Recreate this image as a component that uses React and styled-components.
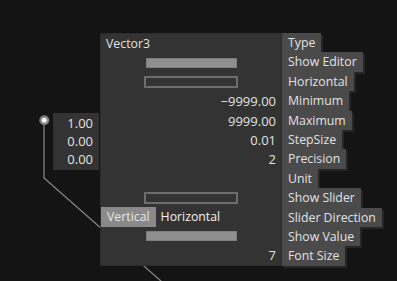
import React from "react";
import styled, { createGlobalStyle } from "styled-components";

const Global = createGlobalStyle`
  html, body { margin: 0; padding: 0; background: #141414; }
  body { font-family: "Open Sans", "Noto Sans", sans-serif; }
`;

const ROW = 19.42;

const Canvas = styled.div`
  position: relative;
  width: 397px;
  height: 281px;
  overflow: hidden;
  background: #141414;
`;

const Wires = styled.svg`
  position: absolute;
  left: 0;
  top: 0;
  width: 397px;
  height: 281px;
`;

const Node = styled.div`
  position: absolute;
  left: 53px;
  top: 33px;
  display: flex;
  align-items: flex-start;
  font-size: 12.3px;
  color: #e2e2e2;
`;

const InputPanel = styled.div`
  margin-top: 80px;
  width: 46px;
  padding: 1px 0;
  background: #333333;
  display: flex;
  flex-direction: column;
`;

const InputValue = styled.div`
  height: 18.2px;
  line-height: 18.2px;
  font-size: 13px;
  text-align: right;
  padding-right: 6px;
`;

const Main = styled.div`
  box-sizing: border-box;
  width: 182px;
  height: ${ROW * 12}px;
  background: #333333;
  border: 1px solid #2b2b2b;
  display: grid;
  grid-template-rows: repeat(12, 1fr);
  margin-left: 1px;
`;

const Cell = styled.div`
  display: flex;
  align-items: center;
  justify-content: center;
  white-space: nowrap;
`;

const TitleCell = styled(Cell)`
  justify-content: flex-start;
  padding-left: 5px;
`;

const ValueCell = styled(Cell)`
  justify-content: flex-end;
  padding-right: 5px;
  font-size: 13px;
`;

const ToggleCell = styled(Cell)`
  justify-content: flex-start;
  align-items: stretch;
`;

const FilledBar = styled.div`
  box-sizing: border-box;
  width: 91px;
  height: 10px;
  background: #8f8f8f;
  border: 1px solid #7d7d7d;
`;

const OutlineBar = styled.div`
  box-sizing: border-box;
  width: 94px;
  height: 12px;
  border: 2px solid #6d6d6d;
`;

const Toggle = styled.div`
  display: flex;
  align-items: center;
  padding: 0 6px 0 ${(p) => (p.$active ? "6px" : "5px")};
  background: ${(p) => (p.$active ? "#8a8a8a" : "transparent")};
  color: ${(p) => (p.$active ? "#e6e6e6" : "#f2f2f2")};
`;

const Labels = styled.div`
  display: flex;
  flex-direction: column;
  align-items: flex-start;
`;

const Label = styled.div`
  height: ${ROW}px;
  line-height: ${ROW}px;
  padding: 0 6px;
  background: #4a4a4a;
  box-shadow: 2px 2px 0 #262626;
  white-space: nowrap;
`;

const labels = [
  "Type",
  "Show Editor",
  "Horizontal",
  "Minimum",
  "Maximum",
  "StepSize",
  "Precision",
  "Unit",
  "Show Slider",
  "Slider Direction",
  "Show Value",
  "Font Size",
];

export default function App() {
  return (
    <Canvas>
      <Global />
      <Wires viewBox="0 0 397 281">
        <polyline
          points="44,125 44,178 170,289"
          fill="none"
          stroke="#8a8a8a"
          strokeWidth="1.2"
        />
        <circle cx="44.3" cy="120.3" r="5" fill="#7a7a7a" />
        <circle cx="44.3" cy="120.3" r="3.4" fill="#a0a0a0" />
        <circle cx="44.3" cy="120.3" r="2.2" fill="#ffffff" />
      </Wires>
      <Node>
        <InputPanel>
          <InputValue>1.00</InputValue>
          <InputValue>0.00</InputValue>
          <InputValue>0.00</InputValue>
        </InputPanel>
        <Main>
          <TitleCell>Vector3</TitleCell>
          <Cell><FilledBar /></Cell>
          <Cell><OutlineBar /></Cell>
          <ValueCell>−9999.00</ValueCell>
          <ValueCell>9999.00</ValueCell>
          <ValueCell>0.01</ValueCell>
          <ValueCell>2</ValueCell>
          <Cell />
          <Cell><OutlineBar /></Cell>
          <ToggleCell>
            <Toggle $active>Vertical</Toggle>
            <Toggle>Horizontal</Toggle>
          </ToggleCell>
          <Cell><FilledBar /></Cell>
          <ValueCell>7</ValueCell>
        </Main>
        <Labels>
          {labels.map((l) => (
            <Label key={l}>{l}</Label>
          ))}
        </Labels>
      </Node>
    </Canvas>
  );
}
